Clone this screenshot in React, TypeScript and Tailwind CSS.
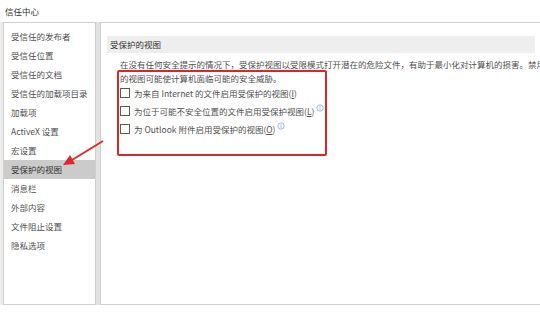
import { ReactNode } from 'react';

const navItems = [
  '受信任的发布者',
  '受信任位置',
  '受信任的文档',
  '受信任的加载项目录',
  '加载项',
  'ActiveX 设置',
  '宏设置',
  '受保护的视图',
  '消息栏',
  '外部内容',
  '文件阻止设置',
  '隐私选项',
];

function InfoIcon() {
  return (
    <svg width="8" height="8" viewBox="0 0 8 8" className="ml-[2px] -mt-[6px] shrink-0">
      <circle cx="4" cy="4" r="3.2" fill="none" stroke="#6a9ee0" strokeWidth="0.7" />
      <rect x="3.65" y="3.3" width="0.7" height="2.5" fill="#6a9ee0" />
      <rect x="3.65" y="2.1" width="0.7" height="0.7" fill="#6a9ee0" />
    </svg>
  );
}

function CheckRow({ children, info }: { children: ReactNode; info?: boolean }) {
  return (
    <div className="flex items-center h-[18px]">
      <span className="w-[10px] h-[10px] border border-[#5a5a5a] bg-white shrink-0" />
      <span className="ml-[4px] whitespace-nowrap">{children}</span>
      {info && <InfoIcon />}
    </div>
  );
}

export default function App() {
  return (
    <div
      className="relative w-[540px] h-[331px] overflow-hidden bg-white text-[8.5px] text-[#505050]"
      style={{ fontFamily: '"Noto Sans CJK SC", "Noto Sans", sans-serif' }}
    >
      <div className="h-[22px] px-[5px] flex items-center text-[#333]">信任中心</div>

      <div className="flex h-[283px] bg-[#ececec] pl-[3px]">
        <div className="w-[93px] bg-white border border-[#cfcfcf] pt-[4px]">
          {navItems.map((item) => (
            <div
              key={item}
              className={`h-[19px] flex items-center pl-[7px] whitespace-nowrap ${
                item === '受保护的视图' ? 'bg-[#cbcbcb] text-[#333]' : ''
              }`}
            >
              {item}
            </div>
          ))}
        </div>

        <div className="w-[4px] bg-[#e2e2e2]" />

        <div className="flex-1 bg-white border border-r-0 border-[#cfcfcf] pt-[13px] pl-[6px] pr-[5px] overflow-hidden">
          <div className="h-[17px] bg-[#eeeeee] flex items-center pl-[3px] text-[#333]">受保护的视图</div>

          <div className="mt-[4px] pl-[13px] leading-[14px] whitespace-nowrap">
            <div>在没有任何安全提示的情况下，受保护视图以受限模式打开潜在的危险文件，有助于最小化对计算机的损害。禁用</div>
            <div>的视图可能使计算机面临可能的安全威胁。</div>
          </div>

          <div className="pl-[13px] mt-[-1px]">
            <CheckRow>
              为来自 Internet 的文件启用受保护的视图(<span className="underline">I</span>)
            </CheckRow>
            <CheckRow info>
              为位于可能不安全位置的文件启用受保护视图(<span className="underline">L</span>)
            </CheckRow>
            <CheckRow info>
              为 Outlook 附件启用受保护的视图(<span className="underline">O</span>)
            </CheckRow>
          </div>
        </div>
      </div>

      {/* annotation overlay */}
      <div className="absolute left-[117px] top-[70px] w-[210px] h-[86px] border-2 border-[#d9262b] rounded-[2px]" />
      <svg className="absolute left-0 top-0" width="540" height="331" viewBox="0 0 540 331">
        <line x1="103" y1="141" x2="72" y2="160" stroke="#e0282b" strokeWidth="2" />
        <polygon points="63,165 75,164 70,155" fill="#e0282b" />
      </svg>
    </div>
  );
}
